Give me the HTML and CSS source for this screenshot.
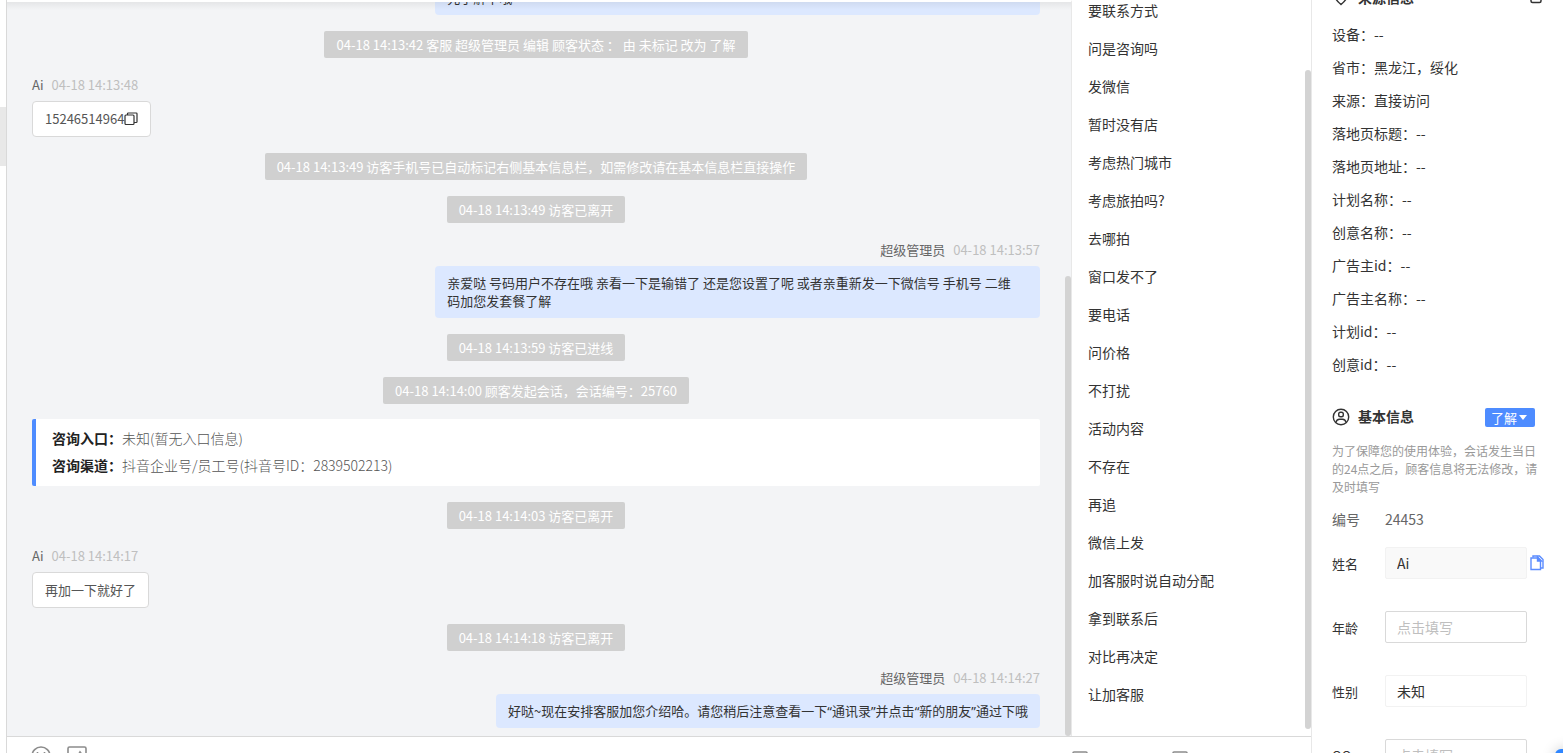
FILE: index.html
```
<!DOCTYPE html>
<html lang="zh-CN">
<head>
  <meta charset="UTF-8">
  <meta name="viewport" content="width=device-width, initial-scale=1.0">
  <title>在线客服</title>
  <link rel="stylesheet" href="styles.css">
</head>
<body>
  <div class="app">
    <!-- 左侧会话列表边缘 -->
    <div class="rail"><div class="rail-active"></div></div>

    <main class="main">
      <div class="panels">
        <!-- 聊天记录 -->
        <section class="chat">
          <div class="messages">
            <p class="bubble mine wide"><br>先了解下哦</p>
            <p class="notice">04-18 14:13:42 客服 超级管理员 编辑 顾客状态 ： 由 未标记 改为 了解</p>
            <div class="message">
              <div class="meta"><span class="name">Ai</span><time>04-18 14:13:48</time></div>
              <div class="bubble">15246514964<button class="icon-btn" aria-label="复制"><svg width="14" height="14" viewBox="0 0 14 14" fill="none" stroke="#333" stroke-width="1.2"><rect x="1" y="3" width="9" height="9.5" rx="1"/><path d="M3.5 3V1.8q0-.8.8-.8h7.9q.8 0 .8.8v7.9q0 .8-.8.8H10"/></svg></button></div>
            </div>
            <p class="notice">04-18 14:13:49 访客手机号已自动标记右侧基本信息栏，如需修改请在基本信息栏直接操作</p>
            <p class="notice">04-18 14:13:49 访客已离开</p>
            <div class="message right">
              <div class="meta"><span class="name">超级管理员</span><time>04-18 14:13:57</time></div>
              <p class="bubble mine wide">亲爱哒 号码用户不存在哦 亲看一下是输错了 还是您设置了呢 或者亲重新发一下微信号 手机号 二维码加您发套餐了解</p>
            </div>
            <p class="notice">04-18 14:13:59 访客已进线</p>
            <p class="notice">04-18 14:14:00 顾客发起会话，会话编号：25760</p>
            <div class="entry">
              <p><b>咨询入口：</b>未知(暂无入口信息)</p>
              <p><b>咨询渠道：</b>抖音企业号/员工号(抖音号ID：2839502213)</p>
            </div>
            <p class="notice">04-18 14:14:03 访客已离开</p>
            <div class="message">
              <div class="meta"><span class="name">Ai</span><time>04-18 14:14:17</time></div>
              <p class="bubble">再加一下就好了</p>
            </div>
            <p class="notice">04-18 14:14:18 访客已离开</p>
            <div class="message right">
              <div class="meta"><span class="name">超级管理员</span><time>04-18 14:14:27</time></div>
              <p class="bubble mine">好哒~现在安排客服加您介绍哈。请您稍后注意查看一下<span class="quote">“</span>通讯录<span class="quote">”</span>并点击<span class="quote">“</span>新的朋友<span class="quote">”</span>通过下哦</p>
            </div>
          </div>
          <div class="scrollbar chat-bar"></div>
        </section>

        <!-- 快捷回复 -->
        <section class="replies">
          <ul>
            <li>要联系方式</li>
            <li>问是咨询吗</li>
            <li>发微信</li>
            <li>暂时没有店</li>
            <li>考虑热门城市</li>
            <li>考虑旅拍吗?</li>
            <li>去哪拍</li>
            <li>窗口发不了</li>
            <li>要电话</li>
            <li>问价格</li>
            <li>不打扰</li>
            <li>活动内容</li>
            <li>不存在</li>
            <li>再追</li>
            <li>微信上发</li>
            <li>加客服时说自动分配</li>
            <li>拿到联系后</li>
            <li>对比再决定</li>
            <li>让加客服</li>
          </ul>
          <div class="scrollbar replies-bar"></div>
        </section>
      </div>

      <!-- 输入工具栏 -->
      <footer class="toolbar">
        <div class="tools">
          <button class="icon-btn" aria-label="表情"><svg width="20" height="20" viewBox="0 0 20 20" fill="none" stroke="#8c8c8c" stroke-width="1.6"><circle cx="10" cy="10" r="9"/><path d="M6.5 6v2M13.5 6v2M5.5 12q4.500 4.500 9 0"/></svg></button>
          <button class="icon-btn" aria-label="图片"><svg width="20" height="20" viewBox="0 0 20 20" fill="none" stroke="#8c8c8c" stroke-width="1.6"><rect x="1" y="1" width="18" height="18" rx="1.500"/><path d="M3 13l4-4 3 2 3-5 4 5"/></svg></button>
        </div>
        <div class="extras">
          <button class="icon-btn" aria-label="常用语"><svg width="16" height="16" viewBox="0 0 16 16" fill="none" stroke="#8c8c8c" stroke-width="1.6"><rect x="1" y="1" width="14" height="14" rx="1"/></svg></button>
          <button class="icon-btn" aria-label="历史记录"><svg width="16" height="16" viewBox="0 0 16 16" fill="none" stroke="#8c8c8c" stroke-width="1.6"><rect x="1" y="1" width="14" height="14" rx="1"/></svg></button>
        </div>
      </footer>
    </main>

    <!-- 访客信息 -->
    <aside class="info">
      <div class="info-head source-head">
        <svg width="18" height="18" viewBox="0 0 18 18" fill="none" stroke="#333" stroke-width="1.5"><path d="M9 15.500Q3 10.500 3 7a6 6 0 0 1 12 0q0 3.500-6 8.500z"/><circle cx="9" cy="7" r="2"/></svg>
        <h2>来源信息</h2>
        <button class="icon-btn" aria-label="复制来源"><svg width="12" height="14" viewBox="0 0 12 14" fill="none" stroke="#333" stroke-width="1.5"><rect x="1" y="2" width="10" height="9.500" rx="1.500"/></svg></button>
      </div>
      <ul class="source">
        <li>设备：--</li>
        <li>省市：黑龙江，绥化</li>
        <li>来源：直接访问</li>
        <li>落地页标题：--</li>
        <li>落地页地址：--</li>
        <li>计划名称：--</li>
        <li>创意名称：--</li>
        <li>广告主id：--</li>
        <li>广告主名称：--</li>
        <li>计划id：--</li>
        <li>创意id：--</li>
      </ul>

      <div class="info-head">
        <svg width="18" height="18" viewBox="0 0 18 18" fill="none" stroke="#333" stroke-width="1.4"><circle cx="9" cy="9" r="7.700"/><rect x="6.700" y="4.200" width="4.600" height="4.600" rx="1.800"/><path d="M4 14.500q.5-3.200 3.500-3.200h3q3 0 3.500 3.200"/></svg>
        <h2>基本信息</h2>
        <div class="status">
          <select aria-label="顾客状态"><option>了解</option><option>未标记</option></select>
        </div>
      </div>
      <p class="tip">为了保障您的使用体验，会话发生当日的24点之后，顾客信息将无法修改，请及时填写</p>
      <div class="number"><span>编号</span><span>24453</span></div>
      <form class="form">
        <div class="field">
          <label for="name">姓名</label>
          <input id="name" class="filled" type="text" value="Ai">
          <button type="button" class="icon-btn" aria-label="复制姓名"><svg width="14" height="16" viewBox="0 0 14 16" fill="none" stroke="#5b8cff" stroke-width="1.4"><path d="M3 2.500V1h6.500L13 4.500V13h-2"/><path d="M1 3h7l2.500 3v8.500H1z"/><path d="M7.500 2v4h4z" fill="#5b8cff"/></svg></button>
        </div>
        <div class="field">
          <label for="age">年龄</label>
          <input id="age" type="text" placeholder="点击填写">
        </div>
        <div class="field">
          <label for="gender">性别</label>
          <select id="gender"><option>未知</option><option>男</option><option>女</option></select>
        </div>
        <div class="field">
          <label for="qq">QQ</label>
          <input id="qq" type="text" placeholder="点击填写">
        </div>
      </form>
    </aside>
  </div>
  <button class="float-btn" aria-label="帮助"></button>
</body>
</html>
```

FILE: styles.css
```
* {
  box-sizing: border-box;
}

body {
  margin: 0;
  font-family: "Noto Sans CJK SC", sans-serif;
  font-size: 14px;
  color: #333;
  background: #fff;
  overflow: hidden;
}

p,
ul,
h2 {
  margin: 0;
  padding: 0;
  list-style: none;
}

button,
input,
select {
  font-family: inherit;
}

.app {
  display: flex;
  height: 100vh;
}

/* 左侧边缘 */
.rail {
  flex: 0 0 7px;
  padding-top: 107px;
  border-right: 1px solid #d9d9d9;
}

.rail-active {
  height: 59px;
  background: #e8e8e8;
}

.main {
  flex: 1;
  min-width: 0;
  display: flex;
  flex-direction: column;
}

.panels {
  flex: 1;
  min-height: 0;
  display: flex;
}

/* 聊天区域 */
.chat {
  position: relative;
  flex: 1;
  min-width: 0;
  display: flex;
  border-top: 2px solid #fff;
  border-right: 1px solid #e8e8e8;
  background: #f3f4f6;
  overflow: hidden;
}

.chat::before {
  content: "";
  position: absolute;
  top: 0;
  left: 0;
  right: 0;
  height: 8px;
  background: linear-gradient(rgba(0, 0, 0, 0.06), transparent);
}

.messages {
  flex: 1;
  display: flex;
  flex-direction: column;
  justify-content: flex-end;
  align-items: center;
  gap: 16px;
  padding: 0 31px 8px 25px;
  font-size: 13px;
  line-height: 18px;
}

.notice {
  padding: 5px 12px 4px;
  border-radius: 2px;
  background: #d0d0d0;
  color: #fff;
}

.message {
  width: 100%;
  display: flex;
  flex-direction: column;
  align-items: flex-start;
}

.message.right {
  align-items: flex-end;
}

.meta {
  display: flex;
  gap: 8px;
  margin-bottom: 6px;
  line-height: 21px;
}

.meta .name {
  color: #666;
}

.meta time {
  color: #bfbfbf;
}

.bubble {
  display: flex;
  align-items: center;
  padding: 8px 12px;
  border: 1px solid #d9d9d9;
  border-radius: 4px;
  background: #fff;
  color: #555;
}

.bubble.mine {
  display: block;
  border: none;
  background: #dce8ff;
  color: #333;
}

.bubble.wide {
  width: 60%;
  padding-right: 20px;
}

.messages > .bubble {
  align-self: flex-end;
}

/* 引号使用西文宽度 */
.quote {
  font-family: "Noto Sans", sans-serif;
}

.entry {
  width: 100%;
  margin-top: -1px;
  padding: 6px 16px 7px;
  border-left: 4px solid #4e8cff;
  border-radius: 2px;
  background: #fff;
  color: #555;
  font-size: 14px;
  font-weight: 300;
  line-height: 27px;
}

.entry b {
  color: #222;
  font-weight: 700;
}

.scrollbar {
  position: absolute;
  right: 0;
  width: 6px;
  border-radius: 3px;
  background: #d3d3d3;
}

.chat-bar {
  top: 274px;
  bottom: 0;
}

.replies-bar {
  top: 70px;
  bottom: 7px;
}

/* 快捷回复 */
.replies {
  position: relative;
  flex: 0 0 239px;
  display: flex;
  flex-direction: column;
  justify-content: flex-end;
  padding: 0 16px 23px;
  overflow: hidden;
}

.replies li {
  line-height: 38px;
}

/* 底部工具栏 */
.toolbar {
  flex: 0 0 17px;
  display: flex;
  justify-content: space-between;
  border-top: 1px solid #d9d9d9;
  overflow: hidden;
}

.tools {
  display: flex;
  align-items: flex-start;
  gap: 16px;
  padding: 9px 24px;
}

.extras {
  flex: 0 0 239px;
  display: flex;
  align-items: flex-start;
  gap: 84px;
  padding-top: 14px;
}

.icon-btn {
  display: flex;
  padding: 0;
  border: none;
  background: none;
  cursor: pointer;
}

/* 右侧信息栏 */
.info {
  flex: 0 0 252px;
  padding: 0 28px 0 20px;
  border-left: 1px solid #e8e8e8;
  overflow: hidden;
}

.info-head {
  display: flex;
  align-items: center;
  gap: 8px;
  height: 36px;
}

.info-head h2 {
  flex: 1;
  padding-bottom: 2px;
  font-size: 14px;
  line-height: 20px;
}

/* 顶部标题已滚出一半 */
.source-head {
  height: 40px;
  margin: -22px -7px 0 0;
}

.source {
  margin-bottom: 18px;
}

.source li {
  line-height: 33px;
}

.status {
  position: relative;
}

.status select {
  display: block;
  width: 50px;
  height: 19px;
  padding: 0 6px;
  border: none;
  border-radius: 2px;
  background: #4e8cff;
  color: #fff;
  font-size: 13px;
  line-height: 19px;
  appearance: none;
}

.status::after {
  content: "";
  position: absolute;
  top: 7px;
  right: 8px;
  border: 4px solid transparent;
  border-top: 5px solid #fff;
  border-bottom: none;
  pointer-events: none;
}

.tip {
  margin: 7px -4px 0 0;
  color: #999;
  font-size: 12px;
  line-height: 18px;
}

.number {
  display: flex;
  margin: 13px 0 18px;
  color: #666;
  line-height: 20px;
}

.number span:first-child {
  width: 53px;
}

.form {
  display: flex;
  flex-direction: column;
  gap: 32px;
  margin-right: -12px;
}

.field {
  display: flex;
  align-items: center;
}

.field label {
  width: 53px;
  font-size: 13px;
}

.field input,
.field select {
  width: 142px;
  height: 32px;
  padding: 0 11px;
  border: 1px solid #d9d9d9;
  border-radius: 2px;
  background: #fff;
  color: #333;
  font-size: 14px;
  appearance: none;
}

.field input::placeholder {
  color: #bfbfbf;
}

.field input.filled {
  border-color: #f2f2f2;
  background: #f9f9f9;
}

.field select {
  border-color: #f2f2f2;
}

.field .icon-btn {
  margin-left: 3px;
}

/* 悬浮按钮 */
.float-btn {
  position: fixed;
  right: -32px;
  bottom: -36px;
  width: 40px;
  height: 40px;
  border: none;
  border-radius: 6px;
  background: #2f86ff;
  box-shadow: 0 0 14px rgba(0, 0, 0, 0.2);
}
```
